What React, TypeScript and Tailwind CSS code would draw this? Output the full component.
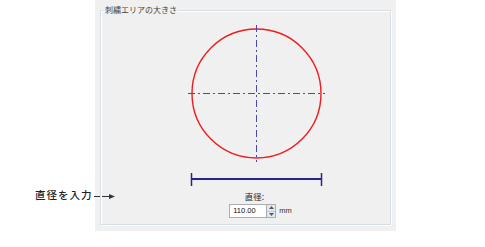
export default function App() {
  return (
    <div className="w-[485px] h-[247px] bg-white flex font-['Noto_Sans_CJK_JP',sans-serif] relative">
      {/* callout */}
      <div className="absolute left-[35px] top-[188px] flex items-center">
        <span className="text-[10.5px] leading-[14px] font-medium tracking-[1px] text-[#222]">直径を入力</span>
        <svg width="22" height="8" viewBox="0 0 22 8" className="ml-[1px] mt-[1px]">
          <line x1="0" y1="4.5" x2="19" y2="4.5" stroke="#333" strokeWidth="1" />
          <path d="M15 2 L21 4.5 L15 7 Z" fill="#333" />
        </svg>
      </div>

      <div className="ml-[95px] w-[301px] h-[231px] bg-[#f0f0f0] pt-[10px] px-[5px]">
        <div className="relative h-[215px] border border-[#d5dfe5] shadow-[inset_1px_1px_0_#fff,1px_1px_0_#fff]">
          <span className="absolute left-[3px] top-[-6px] bg-[#f0f0f0] px-[1px] text-[8px] leading-[10px] text-[#444]">
            刺繍エリアの大きさ
          </span>
          <svg width="291" height="180" viewBox="0 0 291 180" className="absolute left-0 top-0">
            <circle cx="155.5" cy="82.5" r="64.5" fill="none" stroke="#ee1c1c" strokeWidth="1.4" />
            <line x1="87" y1="82.5" x2="224" y2="82.5" stroke="#4848b4" strokeWidth="1" strokeDasharray="7 3 2 3" />
            <line x1="155.5" y1="14" x2="155.5" y2="151" stroke="#4848b4" strokeWidth="1" strokeDasharray="7 3 2 3" />
            <line x1="90" y1="168" x2="221" y2="168" stroke="#25258a" strokeWidth="2" />
            <line x1="90.5" y1="162" x2="90.5" y2="175" stroke="#25258a" strokeWidth="1.5" />
            <line x1="220.5" y1="162" x2="220.5" y2="175" stroke="#25258a" strokeWidth="1.5" />
          </svg>
          <div className="absolute left-0 right-0 top-[180px] flex flex-col items-center">
            <span className="text-[8.5px] leading-[10px] text-[#222] ml-[18px]">直径:</span>
            <div className="flex items-center mt-[3px] ml-[30px]">
              <div className="w-[38px] h-[14px] bg-white border border-[#abadb3] text-[7.5px] leading-[12px] pl-[3px] font-['Liberation_Sans',sans-serif] text-[#111]">
                110.00
              </div>
              <div className="w-[9px] h-[14px] flex flex-col border border-l-0 border-[#abadb3]">
                <div className="flex-1 bg-[#e4e8ec] border-b border-[#c8ccd0] flex items-center justify-center">
                  <svg width="5" height="3" viewBox="0 0 5 3"><path d="M0 3 L2.5 0 L5 3 Z" fill="#4a5a6a" /></svg>
                </div>
                <div className="flex-1 bg-[#e4e8ec] flex items-center justify-center">
                  <svg width="5" height="3" viewBox="0 0 5 3"><path d="M0 0 L2.5 3 L5 0 Z" fill="#4a5a6a" /></svg>
                </div>
              </div>
              <span className="ml-[3px] text-[7.5px] font-['Liberation_Sans',sans-serif] text-[#333]">mm</span>
            </div>
          </div>
        </div>
      </div>
    </div>
  )
}
